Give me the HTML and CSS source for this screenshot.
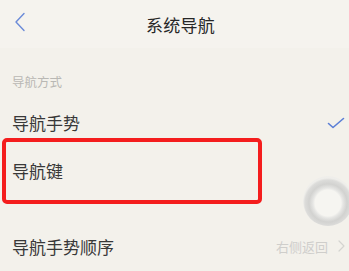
FILE: index.html
```html
<!DOCTYPE html>
<html lang="zh">
<head>
<meta charset="utf-8">
<link rel="stylesheet" href="styles.css">
</head>
<body>
<div class="screen">
  <header class="header">
    <svg class="back" width="12" height="20" viewBox="0 0 12 20"><path d="M10 1.5 L2 10 L10 18.5" fill="none" stroke="#6a8ad8" stroke-width="1.4" stroke-linecap="round" stroke-linejoin="round"/></svg>
    <h1 class="title">系统导航</h1>
  </header>
  <div class="section-label">导航方式</div>
  <div class="list">
    <div class="row">
      <span class="row-text">导航手势</span>
      <svg class="check" width="18" height="12" viewBox="0 0 18 12"><path d="M1.5 6.5 L6 10.5 L16.5 1.5" fill="none" stroke="#5b7fd6" stroke-width="1.6" stroke-linecap="round" stroke-linejoin="round"/></svg>
    </div>
    <div class="row">
      <span class="row-text">导航键</span>
    </div>
    <div class="row row-gap">
      <span class="row-text">导航手势顺序</span>
      <span class="row-value">右侧返回
        <svg class="arrow" width="7" height="12" viewBox="0 0 7 12"><path d="M1 1 L6 6 L1 11" fill="none" stroke="#d4d4d0" stroke-width="1.2" stroke-linecap="round" stroke-linejoin="round"/></svg>
      </span>
    </div>
  </div>
  <div class="highlight"></div>
  <div class="ball"></div>
</div>
</body>
</html>
```
FILE: styles.css
```css
* { box-sizing: border-box; margin: 0; padding: 0; }
html, body { width: 349px; height: 271px; overflow: hidden; }
body {
  background: #f3f1eb;
  font-family: "Noto Sans CJK SC", "Noto Sans", sans-serif;
  color: #333;
}
.screen { position: relative; width: 349px; height: 271px; }
.header {
  position: relative;
  height: 48px;
  display: flex;
  align-items: center;
  justify-content: center;
  background: #f5f3ee;
}
.back { position: absolute; left: 14px; top: 12px; }
.title {
  font-size: 17px;
  font-weight: 400;
  color: #262626;
  letter-spacing: 0.2px;
  margin-left: 12px;
}
.section-label {
  margin-top: 24px;
  height: 20px;
  line-height: 20px;
  padding-left: 12px;
  font-size: 12.5px;
  color: #b9b8b4;
}
.list { margin-top: 6px; }
.row {
  height: 48px;
  display: flex;
  align-items: center;
  justify-content: space-between;
  padding: 0 4px 0 12px;
}
.row-gap { margin-top: 28px; }
.row-text { font-size: 17px; color: #383838; }
.check { margin-top: 2px; }
.row-value {
  display: flex;
  align-items: center;
  gap: 10px;
  font-size: 13px;
  color: #cfcecb;
}
.highlight {
  position: absolute;
  left: 2px;
  top: 138px;
  width: 260px;
  height: 66px;
  border: 4px solid #f41d1d;
  border-radius: 5px;
}
.ball {
  position: absolute;
  left: 303px;
  top: 176px;
  width: 50px;
  height: 50px;
  border-radius: 50%;
  background: radial-gradient(circle at 50% 54%, #f6f5f1 0 13px, #e6e6e4 15px, #d2d2d0 19px, #dcdcda 23px, rgba(236,236,234,0.6) 25px);
}
```
